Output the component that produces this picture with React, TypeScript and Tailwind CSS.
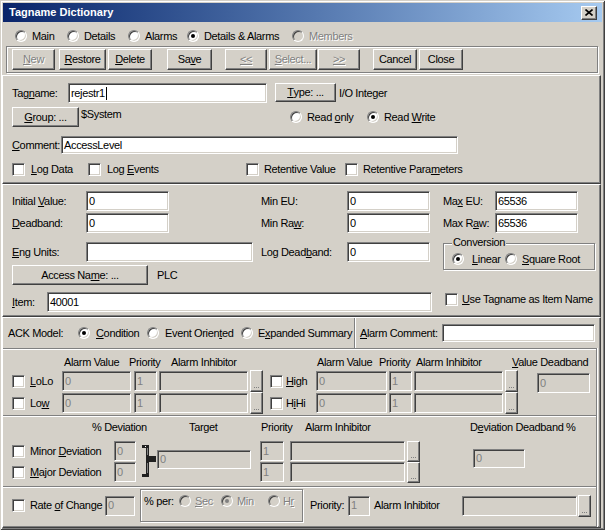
import React from "react";

const F =
  "font-['Liberation_Sans',Arial,sans-serif] text-[11px] tracking-[-0.35px] leading-[13px] text-black";
const SUNK =
  "border border-t-[#808080] border-l-[#808080] border-b-white border-r-white shadow-[inset_1px_1px_0_#404040,inset_-1px_-1px_0_#d4d0c8]";
const RAISE =
  "border border-t-white border-l-white border-b-[#404040] border-r-[#404040] shadow-[inset_-1px_-1px_0_#808080]";
const DIS = "text-[#808080] [text-shadow:1px_1px_0_#fff]";
const ETCH = "border border-[#808080] shadow-[inset_1px_1px_0_#fff,1px_1px_0_#fff]";
const PANEL =
  "mr-[2px] border border-t-white border-l-white border-b-[#404040] border-r-[#404040] shadow-[inset_-1px_-1px_0_#808080]";

type C = { children?: React.ReactNode };

function Input({
  cls,
  value = "",
  disabled,
  caret,
}: {
  cls: string;
  value?: string;
  disabled?: boolean;
  caret?: boolean;
}) {
  return (
    <div
      className={`${SUNK} ${cls} shrink-0 flex items-center pl-[2px] overflow-hidden whitespace-nowrap ${
        disabled ? "bg-[#d4d0c8] text-[#808080]" : "bg-white text-black"
      }`}
    >
      {value}
      {caret && <span className="inline-block w-px h-[13px] bg-black ml-px" />}
    </div>
  );
}

function Btn({ cls, children, disabled }: C & { cls: string; disabled?: boolean }) {
  return (
    <div
      className={`${RAISE} ${cls} shrink-0 bg-[#d4d0c8] flex items-center justify-center whitespace-nowrap ${
        disabled ? DIS : ""
      }`}
    >
      {children}
    </div>
  );
}

function Dots({ cls }: { cls: string }) {
  return (
    <div className={`${RAISE} ${cls} shrink-0 bg-[#d4d0c8] flex items-end justify-center gap-[1px] pb-[3px]`}>
      <span className="w-[1px] h-[1px] bg-[#808080]" />
      <span className="w-[1px] h-[1px] bg-[#808080]" />
      <span className="w-[1px] h-[1px] bg-[#808080]" />
    </div>
  );
}

function RadioDot({ checked, disabled }: { checked?: boolean; disabled?: boolean }) {
  return (
    <div
      className={`w-[12px] h-[12px] shrink-0 rounded-full border border-t-[#808080] border-l-[#808080] border-b-white border-r-white shadow-[inset_1px_1px_0_#404040,inset_-1px_-1px_0_#d4d0c8] flex items-center justify-center ${
        disabled ? "bg-[#d4d0c8]" : "bg-white"
      }`}
    >
      {checked && (
        <div className={`w-[4px] h-[4px] rounded-full ${disabled ? "bg-[#808080]" : "bg-black"}`} />
      )}
    </div>
  );
}

function Radio({
  cls = "",
  gap = "gap-[5px]",
  checked,
  disabled,
  children,
}: C & { cls?: string; gap?: string; checked?: boolean; disabled?: boolean }) {
  return (
    <div className={`flex items-center shrink-0 whitespace-nowrap ${gap} ${cls}`}>
      <RadioDot checked={checked} disabled={disabled} />
      <span className={disabled ? DIS : ""}>{children}</span>
    </div>
  );
}

function Box() {
  return <div className={`w-[13px] h-[13px] shrink-0 bg-white ${SUNK}`} />;
}

function Check({ cls = "", gap = "gap-[6px]", children }: C & { cls?: string; gap?: string }) {
  return (
    <div className={`flex items-center shrink-0 whitespace-nowrap ${gap} ${cls}`}>
      <Box />
      <span>{children}</span>
    </div>
  );
}

function Bracket() {
  return (
    <svg width="16" height="42" viewBox="0 0 16 42" className="shrink-0">
      <rect x="1" y="4" width="5" height="3" fill="#202020" />
      <rect x="5" y="4" width="3" height="32" fill="#202020" />
      <rect x="5" y="15" width="10" height="6" fill="#202020" />
      <rect x="1" y="33" width="5" height="3" fill="#202020" />
      <rect x="4" y="5" width="1" height="1" fill="#fff" />
      <rect x="6" y="7" width="1" height="7" fill="#808080" />
      <rect x="6" y="22" width="1" height="10" fill="#808080" />
    </svg>
  );
}

export default function App() {
  return (
    <div
      className={`${F} w-[605px] h-[530px] bg-[#d4d0c8] px-[2px] pt-[3px] overflow-hidden shadow-[inset_1px_1px_0_#d4d0c8,inset_-1px_-1px_0_#404040,inset_2px_2px_0_#fff,inset_-2px_-2px_0_#808080]`}
    >
      {/* Title bar */}
      <div className="mx-[1px] h-[19px] bg-linear-to-r from-[#0a246a] to-[#a6caf0] flex items-center pl-[6px] pr-[5px]">
        <span className="font-bold text-white tracking-normal">Tagname Dictionary</span>
        <div className={`ml-auto w-[16px] h-[14px] ${RAISE} bg-[#d4d0c8] flex items-center justify-center`}>
          <svg width="8" height="7" viewBox="0 0 8 7">
            <path d="M0.5 0.5L7.5 6.5M7.5 0.5L0.5 6.5" stroke="#000" strokeWidth="1.6" />
          </svg>
        </div>
      </div>

      {/* View radios */}
      <div className="mt-[5px] h-[18px] flex items-center pl-[13px]">
        <Radio cls="w-[52px]">Main</Radio>
        <Radio cls="w-[61px]">Details</Radio>
        <Radio cls="w-[59px]">Alarms</Radio>
        <Radio cls="w-[105px]" checked>
          Details &amp; Alarms
        </Radio>
        <Radio disabled>Members</Radio>
      </div>

      {/* Toolbar */}
      <div className={`mt-[1px] ml-[4px] w-[592px] h-[27px] ${ETCH} flex items-center`}>
        <Btn cls="ml-[5px] w-[43px] h-[21px]" disabled>
          <u>N</u>ew
        </Btn>
        <Btn cls="ml-[4px] w-[47px] h-[21px]">
          <u>R</u>estore
        </Btn>
        <Btn cls="ml-[2px] w-[44px] h-[21px]">
          <u>D</u>elete
        </Btn>
        <Btn cls="ml-[15px] w-[45px] h-[21px]">
          Sa<u>v</u>e
        </Btn>
        <Btn cls="ml-[13px] w-[42px] h-[21px]" disabled>
          <u>&lt;&lt;</u>
        </Btn>
        <Btn cls="ml-[2px] w-[48px] h-[21px]" disabled>
          <u>S</u>elect...
        </Btn>
        <Btn cls="ml-[1px] w-[42px] h-[21px]" disabled>
          <u>&gt;&gt;</u>
        </Btn>
        <Btn cls="ml-[13px] w-[44px] h-[21px]">Cancel</Btn>
        <Btn cls="ml-[2px] w-[44px] h-[21px]">Close</Btn>
      </div>

      {/* Panel 1 */}
      <div className={`${PANEL} mt-[2px] h-[109px]`}>
        <div className="mt-[7px] h-[20px] flex items-center pl-[9px]">
          <span className="w-[56px] shrink-0">
            Tag<u>n</u>ame:
          </span>
          <Input cls="w-[199px] h-[20px]" value="rejestr1" caret />
          <Btn cls="ml-[8px] w-[61px] h-[19px] self-start">
            <u>T</u>ype: ...
          </Btn>
          <span className="ml-[3px]">I/O Integer</span>
        </div>
        <div className="mt-[4px] h-[20px] flex items-center pl-[9px]">
          <Btn cls="w-[67px] h-[20px]">
            <u>G</u>roup: ...
          </Btn>
          <span className="ml-[2px] w-[209px] shrink-0 self-start pt-[1px]">$System</span>
          <Radio cls="w-[77px]">
            Read <u>o</u>nly
          </Radio>
          <Radio checked>
            Read <u>W</u>rite
          </Radio>
        </div>
        <div className="mt-[9px] h-[18px] flex items-center pl-[9px]">
          <span className="w-[49px] shrink-0">
            <u>C</u>omment:
          </span>
          <Input cls="w-[397px] h-[18px]" value="AccessLevel" />
        </div>
        <div className="mt-[9px] h-[13px] flex items-center pl-[9px]">
          <Check cls="w-[76px]">
            <u>L</u>og Data
          </Check>
          <Check cls="w-[158px]">
            Log <u>E</u>vents
          </Check>
          <Check cls="w-[99px]" gap="gap-[5px]">
            Retentive Value
          </Check>
          <Check gap="gap-[5px]">
            Retentive Para<u>m</u>eters
          </Check>
        </div>
      </div>

      {/* Panel 2 */}
      <div className={`${PANEL} h-[133px]`}>
        <div className="mt-[6px] h-[20px] flex items-center pl-[9px]">
          <span className="w-[74px] shrink-0">
            Initial <u>V</u>alue:
          </span>
          <Input cls="w-[83px] h-[20px]" value="0" />
          <span className="ml-[92px] w-[86px] shrink-0">Min EU:</span>
          <Input cls="w-[83px] h-[20px]" value="0" />
          <span className="ml-[13px] w-[52px] shrink-0">
            Ma<u>x</u> EU:
          </span>
          <Input cls="w-[83px] h-[20px]" value="65536" />
        </div>
        <div className="mt-[2px] h-[20px] flex items-center pl-[9px]">
          <span className="w-[74px] shrink-0">
            <u>D</u>eadband:
          </span>
          <Input cls="w-[83px] h-[20px]" value="0" />
          <span className="ml-[92px] w-[86px] shrink-0">
            Min Ra<u>w</u>:
          </span>
          <Input cls="w-[83px] h-[20px]" value="0" />
          <span className="ml-[13px] w-[52px] shrink-0">
            Max R<u>a</u>w:
          </span>
          <Input cls="w-[83px] h-[20px]" value="65536" />
        </div>
        <div className="mt-[9px] h-[20px] flex items-center pl-[9px]">
          <span className="w-[74px] shrink-0">
            <u>E</u>ng Units:
          </span>
          <Input cls="w-[167px] h-[20px]" />
          <span className="ml-[8px] w-[86px] shrink-0">
            Log Dead<u>b</u>and:
          </span>
          <Input cls="w-[83px] h-[20px]" value="0" />
          <div className={`relative ml-[13px] w-[152px] h-[27px] shrink-0 self-start mt-[1px] -mb-[8px] ${ETCH}`}>
            <span className="absolute left-[8px] -top-[8px] px-[1px] bg-[#d4d0c8]">Conversion</span>
            <div className="flex items-center h-full pt-[5px] pl-[8px]">
              <Radio cls="w-[53px]" gap="gap-[8px]" checked>
                <u>L</u>inear
              </Radio>
              <Radio>
                <u>S</u>quare Root
              </Radio>
            </div>
          </div>
        </div>
        <div className="mt-[3px] h-[20px] flex items-center pl-[9px]">
          <Btn cls="w-[136px] h-[20px]">
            Access Na<u>m</u>e: ...
          </Btn>
          <span className="ml-[9px]">PLC</span>
        </div>
        <div className="mt-[7px] h-[20px] flex items-center pl-[9px]">
          <span className="w-[35px] shrink-0">
            <u>I</u>tem:
          </span>
          <Input cls="w-[385px] h-[20px]" value="40001" />
          <div className="ml-[13px] self-start mt-[1px]">
            <Check gap="gap-[4px]">
              <u>U</u>se Tagname as Item Name
            </Check>
          </div>
        </div>
      </div>

      {/* Panel 3 */}
      <div className={`${PANEL} h-[211px]`}>
        {/* ACK row */}
        <div className="h-[30px] flex items-center">
          <div className="w-[352px] h-[30px] shrink-0 flex items-center pl-[5px] border-r border-r-[#808080] shadow-[1px_0_0_#fff]">
            <span className="w-[70px] shrink-0">ACK Model:</span>
            <Radio cls="w-[69px]" gap="gap-[6px]" checked>
              <u>C</u>ondition
            </Radio>
            <Radio cls="w-[94px]" gap="gap-[6px]">
              Event Orien<u>t</u>ed
            </Radio>
            <Radio gap="gap-[5px]">
              E<u>x</u>panded Summary
            </Radio>
          </div>
          <span className="ml-[5px] w-[82px] shrink-0">
            <u>A</u>larm Comment:
          </span>
          <Input cls="w-[153px] h-[18px]" />
        </div>

        {/* Limit alarms */}
        <div className="w-[594px] h-[67px] border-t border-r border-[#808080] shadow-[inset_0_1px_0_#fff,1px_0_0_#fff]">
          <div className="mt-[6px] h-[14px] flex items-center pl-[61px] whitespace-nowrap">
            <span className="w-[65px] shrink-0">Alarm Value</span>
            <span className="w-[42px] shrink-0">Priority</span>
            <span className="w-[146px] shrink-0">Alarm Inhibitor</span>
            <span className="w-[62px] shrink-0">Alarm Value</span>
            <span className="w-[37px] shrink-0">Priority</span>
            <span className="w-[96px] shrink-0">Alarm Inhibitor</span>
            <span>
              <u>V</u>alue Deadband
            </span>
          </div>
          <div className="mt-[1px] h-[22px] flex items-center pl-[9px]">
            <Check cls="w-[50px]" gap="gap-[5px]">
              <u>L</u>oLo
            </Check>
            <Input cls="w-[69px] h-[20px]" value="0" disabled />
            <Input cls="ml-[3px] w-[23px] h-[20px]" value="1" disabled />
            <Input cls="ml-[2px] w-[89px] h-[20px]" disabled />
            <Dots cls="ml-[2px] w-[13px] h-[22px]" />
            <Check cls="ml-[7px] w-[46px]" gap="gap-[3px]">
              <u>H</u>igh
            </Check>
            <Input cls="w-[71px] h-[20px]" value="0" disabled />
            <Input cls="ml-[2px] w-[23px] h-[20px]" value="1" disabled />
            <Input cls="ml-[2px] w-[89px] h-[20px]" disabled />
            <Dots cls="ml-[2px] w-[13px] h-[22px]" />
            <div className="ml-[19px] self-start mt-[3px]">
              <Input cls="w-[53px] h-[20px]" value="0" disabled />
            </div>
          </div>
          <div className="h-[22px] flex items-center pl-[9px]">
            <Check cls="w-[50px]" gap="gap-[5px]">
              Lo<u>w</u>
            </Check>
            <Input cls="w-[69px] h-[20px]" value="0" disabled />
            <Input cls="ml-[3px] w-[23px] h-[20px]" value="1" disabled />
            <Input cls="ml-[2px] w-[89px] h-[20px]" disabled />
            <Dots cls="ml-[2px] w-[13px] h-[22px]" />
            <Check cls="ml-[7px] w-[46px]" gap="gap-[3px]">
              H<u>i</u>Hi
            </Check>
            <Input cls="w-[71px] h-[20px]" value="0" disabled />
            <Input cls="ml-[2px] w-[23px] h-[20px]" value="1" disabled />
            <Input cls="ml-[2px] w-[89px] h-[20px]" disabled />
            <Dots cls="ml-[2px] w-[13px] h-[22px]" />
          </div>
        </div>

        {/* Deviation alarms */}
        <div className="w-[594px] h-[71px] border-t border-r border-[#808080] shadow-[inset_0_1px_0_#fff,1px_0_0_#fff]">
          <div className="mt-[5px] h-[13px] flex items-center pl-[89px] whitespace-nowrap">
            <span className="w-[97px] shrink-0">% Deviation</span>
            <span className="w-[72px] shrink-0">Target</span>
            <span className="w-[44px] shrink-0">Priority</span>
            <span className="w-[165px] shrink-0">Alarm Inhibitor</span>
            <span>
              D<u>e</u>viation Deadband %
            </span>
          </div>
          <div className="mt-[7px] h-[42px] flex items-start pl-[9px]">
            <div className="w-[102px] shrink-0 flex flex-col">
              <div className="h-[21px] flex items-center">
                <Check gap="gap-[5px]">
                  Minor <u>D</u>eviation
                </Check>
              </div>
              <div className="h-[21px] flex items-center">
                <Check gap="gap-[5px]">
                  <u>M</u>ajor Deviation
                </Check>
              </div>
            </div>
            <div className="flex flex-col gap-[1px]">
              <Input cls="w-[22px] h-[20px]" value="0" disabled />
              <Input cls="w-[22px] h-[20px]" value="0" disabled />
            </div>
            <div className="ml-[5px]">
              <Bracket />
            </div>
            <div className="mt-[9px]">
              <Input cls="w-[94px] h-[19px]" value="0" disabled />
            </div>
            <div className="ml-[9px] flex flex-col gap-[1px]">
              <Input cls="w-[24px] h-[20px]" value="1" disabled />
              <Input cls="w-[24px] h-[20px]" value="1" disabled />
            </div>
            <div className="ml-[6px] flex flex-col gap-[1px]">
              <Input cls="w-[115px] h-[20px]" disabled />
              <Input cls="w-[115px] h-[20px]" disabled />
            </div>
            <div className="ml-[2px] flex flex-col">
              <Dots cls="w-[13px] h-[21px]" />
              <Dots cls="w-[13px] h-[21px]" />
            </div>
            <div className="ml-[53px] mt-[8px]">
              <Input cls="w-[52px] h-[19px]" value="0" disabled />
            </div>
          </div>
        </div>

        {/* Rate of change */}
        <div className="w-[594px] h-[41px] border-t border-r border-[#808080] shadow-[inset_0_1px_0_#fff,1px_0_0_#fff]">
          <div className="mt-[2px] h-[33px] flex items-center pl-[9px]">
            <Check cls="w-[93px]" gap="gap-[5px]">
              Rate <u>o</u>f Change
            </Check>
            <Input cls="w-[30px] h-[20px]" value="0" disabled />
            <div className={`ml-[5px] w-[163px] h-[33px] shrink-0 ${ETCH}`}>
              <div className="h-[22px] flex items-center pl-[3px]">
                <span className="w-[35px] shrink-0">% per:</span>
                <Radio cls="w-[42px]" gap="gap-[4px]" disabled>
                  <u>S</u>ec
                </Radio>
                <Radio cls="w-[47px]" gap="gap-[4px]" disabled checked>
                  Min
                </Radio>
                <Radio gap="gap-[3px]" disabled>
                  H<u>r</u>
                </Radio>
              </div>
            </div>
            <span className="ml-[7px] w-[38px] shrink-0">Priority:</span>
            <Input cls="w-[22px] h-[20px]" value="1" disabled />
            <span className="ml-[4px] w-[88px] shrink-0">Alarm Inhibitor</span>
            <Input cls="w-[115px] h-[20px]" disabled />
            <Dots cls="ml-[1px] w-[13px] h-[22px]" />
          </div>
        </div>
      </div>
    </div>
  );
}
